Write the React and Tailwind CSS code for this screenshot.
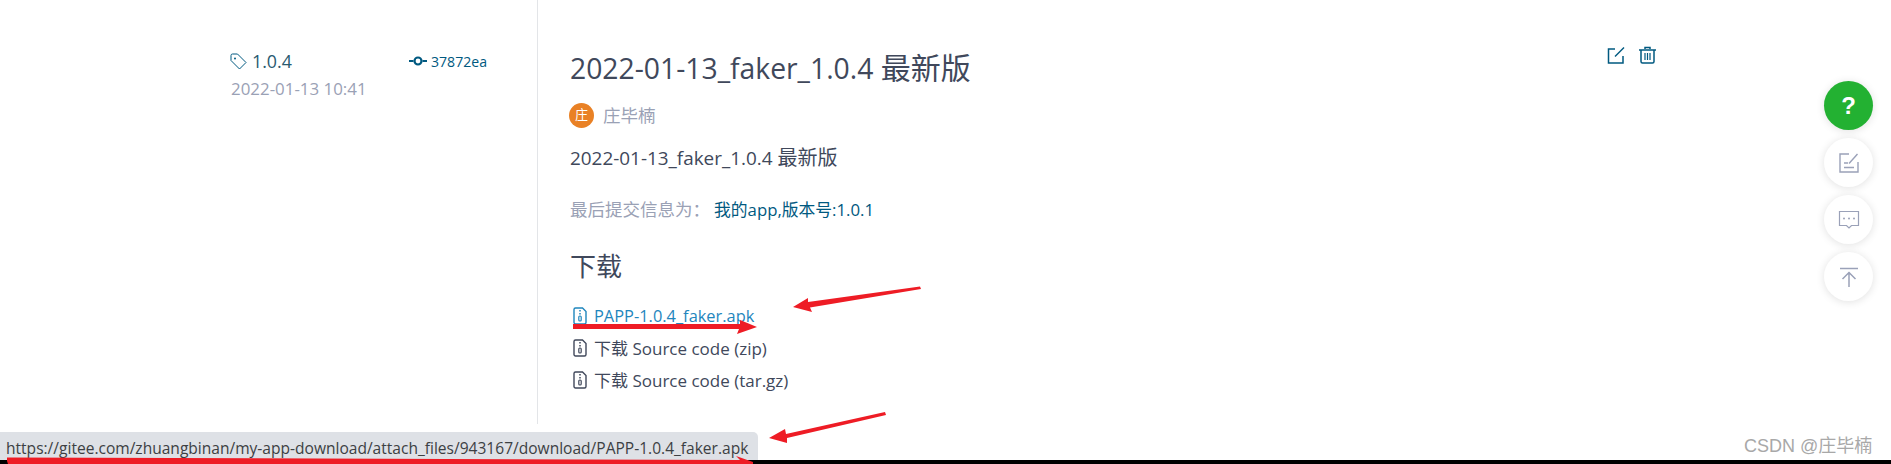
const FONT = "font-['Open_Sans','Noto_Sans_CJK_SC',sans-serif]";

function FileIcon({ className }) {
  return (
    <svg width="14" height="18" viewBox="0 0 14 18" fill="none" className={className}>
      <path d="M2.500 1h7L13 4.500V15.500a1.500 1.500 0 0 1-1.500 1.500h-9A1.500 1.500 0 0 1 1 15.500V2.500A1.500 1.500 0 0 1 2.500 1z" stroke="currentColor" strokeWidth="1.400" />
      <path d="M7 3v1.500M7 6v1.500" stroke="currentColor" strokeWidth="1.500" />
      <rect x="5.800" y="9" width="2.400" height="5" rx="1" stroke="currentColor" strokeWidth="1.200" />
    </svg>
  );
}

function FloatButton({ children, green }) {
  return (
    <div
      className={`flex items-center justify-center rounded-full w-[49px] h-[49px] shadow-[0_1px_8px_rgba(0,0,0,0.12)] ${
        green ? "bg-[#23b132] text-white" : "bg-white text-[#9aa1b8]"
      }`}
    >
      {children}
    </div>
  );
}

function DownloadRow({ children, link }) {
  return (
    <div className={`flex items-center h-[32px] ${link ? "text-[16.400px] text-[#1f86bd]" : "text-[17px] text-[#40485b]"}`}>
      <FileIcon className="mr-[7px] ml-[3px]" />
      <span>{children}</span>
    </div>
  );
}

export default function App() {
  return (
    <div className={`relative h-[464px] overflow-hidden bg-white ${FONT}`}>
      <div className="flex h-[424px] pl-[230px]">
        <div className="w-[307px] pt-[48px] shrink-0">
          <div className="flex items-center">
            <svg width="17" height="17" viewBox="0 0 17 17" fill="none" className="text-[#005980] mr-[5px]">
              <path d="M1 2.500V7.500L9.500 16 16 9.500 7.500 1H2.500A1.500 1.500 0 0 0 1 2.500z" stroke="currentColor" strokeWidth="1" />
              <circle cx="5" cy="5.500" r="1" fill="currentColor" />
            </svg>
            <span className="text-[17.800px] text-[#2a5a70] w-[158px]">1.0.4</span>
            <svg width="18" height="10" viewBox="0 0 18 10" fill="none" className="text-[#005980] mr-[4px] ml-[-1px]">
              <path d="M0 5h4.500M13.500 5H18" stroke="currentColor" strokeWidth="2" />
              <circle cx="9" cy="5" r="3.500" stroke="currentColor" strokeWidth="2.200" />
            </svg>
            <span className="text-[14.100px] text-[#005980]">37872ea</span>
          </div>
          <div className="mt-[1px] ml-[1px] text-[16.900px] text-[#9aa1b5]">2022-01-13 10:41</div>
        </div>

        <div className="flex-1 border-l border-[#e3e5e8] pl-[32px] pt-[46px] relative">
          <h1 className="text-[28.300px] leading-[44px] text-[#40485b] font-normal">
            2022-01-13_faker_1.0.4 <span className="text-[30px]">最新版</span>
          </h1>
          <div className="flex items-center mt-[12px] ml-[-1px]">
            <div className="flex items-center justify-center w-[25px] h-[25px] rounded-full bg-[#e98125] text-white text-[13px]">庄</div>
            <span className="ml-[9px] text-[17.500px] text-[#9aa1b5]">庄毕楠</span>
          </div>
          <div className="mt-[17px] text-[18.900px] leading-[26px] text-[#40485b]">
            2022-01-13_faker_1.0.4 <span className="text-[20px]">最新版</span>
          </div>
          <div className="mt-[25px] flex items-baseline leading-[26px]">
            <span className="text-[17.500px] text-[#9aa1b5] w-[145px]">最后提交信息为：</span>
            <span className="text-[16.800px] text-[#005980] ml-[-1px]">我的app,版本号:1.0.1</span>
          </div>
          <h2 className="mt-[25px] text-[26px] leading-[36px] text-[#40485b] font-normal">下载</h2>
          <div className="mt-[16px]">
            <DownloadRow link>PAPP-1.0.4_faker.apk</DownloadRow>
            <DownloadRow>下载 Source code (zip)</DownloadRow>
            <DownloadRow>下载 Source code (tar.gz)</DownloadRow>
          </div>

          <div className="absolute top-[46px] left-[1069px] flex gap-[12px] text-[#005980]">
            <svg width="19" height="19" viewBox="0 0 19 19" fill="none">
              <path d="M8 3H1.500V17H16V10" stroke="currentColor" strokeWidth="1.500" />
              <path d="M8 10.500L17 1.500" stroke="currentColor" strokeWidth="1.500" />
            </svg>
            <svg width="19" height="19" viewBox="0 0 19 19" fill="none">
              <path d="M1 4H18M7 3V1.500H12V3" stroke="currentColor" strokeWidth="1.500" />
              <path d="M3 4V15.500A1.500 1.500 0 0 0 4.500 17H14.500A1.500 1.500 0 0 0 16 15.500V4" stroke="currentColor" strokeWidth="1.500" />
              <path d="M7 7V14M9.500 7V14M12 7V14" stroke="currentColor" strokeWidth="1.200" />
            </svg>
          </div>
        </div>
      </div>

      <div className="absolute left-[1824px] top-[81px] flex flex-col gap-[8px]">
        <FloatButton green><span className="text-[24px] font-bold font-['Liberation_Sans',sans-serif]">?</span></FloatButton>
        <FloatButton>
          <svg width="22" height="22" viewBox="0 0 22 22" fill="none" stroke="currentColor" strokeWidth="1.400">
            <path d="M11 2H2V20H20V10" />
            <path d="M11 11.500L19.500 2" />
            <path d="M6 11H10M6 15.500H16" />
          </svg>
        </FloatButton>
        <FloatButton>
          <svg width="22" height="20" viewBox="0 0 22 20" fill="none" stroke="currentColor" strokeWidth="1.200">
            <path d="M1.500 1.500H20.500V15.500H13.500L11 18 8.500 15.500H1.500z" />
            <circle cx="6" cy="8.500" r="1" fill="currentColor" stroke="none" />
            <circle cx="11" cy="8.500" r="1" fill="currentColor" stroke="none" />
            <circle cx="16" cy="8.500" r="1" fill="currentColor" stroke="none" />
          </svg>
        </FloatButton>
        <FloatButton>
          <svg width="20" height="20" viewBox="0 0 20 20" fill="none" stroke="currentColor" strokeWidth="1.500">
            <path d="M1 1.500H19" />
            <path d="M10 20V5M3.500 12L10 5.500 16.500 12" />
          </svg>
        </FloatButton>
      </div>

      <div className="absolute left-0 bottom-[4px] w-[758px] h-[28px] bg-[#dee1e6] rounded-tr-[5px] pl-[6px] text-[15.560px] leading-[32px] text-[#3c4043] whitespace-nowrap">
        https://gitee.com/zhuangbinan/my-app-download/attach_files/943167/download/PAPP-1.0.4_faker.apk
      </div>

      <div className="absolute left-[1744px] bottom-[6px] text-[18px] leading-[24px] text-[#a8a8a8] font-['Liberation_Sans','Noto_Sans_CJK_SC',sans-serif]">
        CSDN @庄毕楠
      </div>

      <div className="absolute left-0 right-0 bottom-0 h-[4px] bg-black" />

      <svg className="absolute inset-0 pointer-events-none" width="1891" height="464" viewBox="0 0 1891 464" fill="#ee1c25">
        <path d="M920 286.500L808 302 808 298 793 307 812 312 810 307.500 921 289z" />
        <path d="M573 324H740V320L757 327 737 334 739 329H573z" />
        <path d="M885 412L786 434 785 429 769 438 787 443 787 438 886 415z" />
        <path d="M7 457.500L740 460 736 456 753 462 753 464H8L7 461z" />
      </svg>
    </div>
  );
}
